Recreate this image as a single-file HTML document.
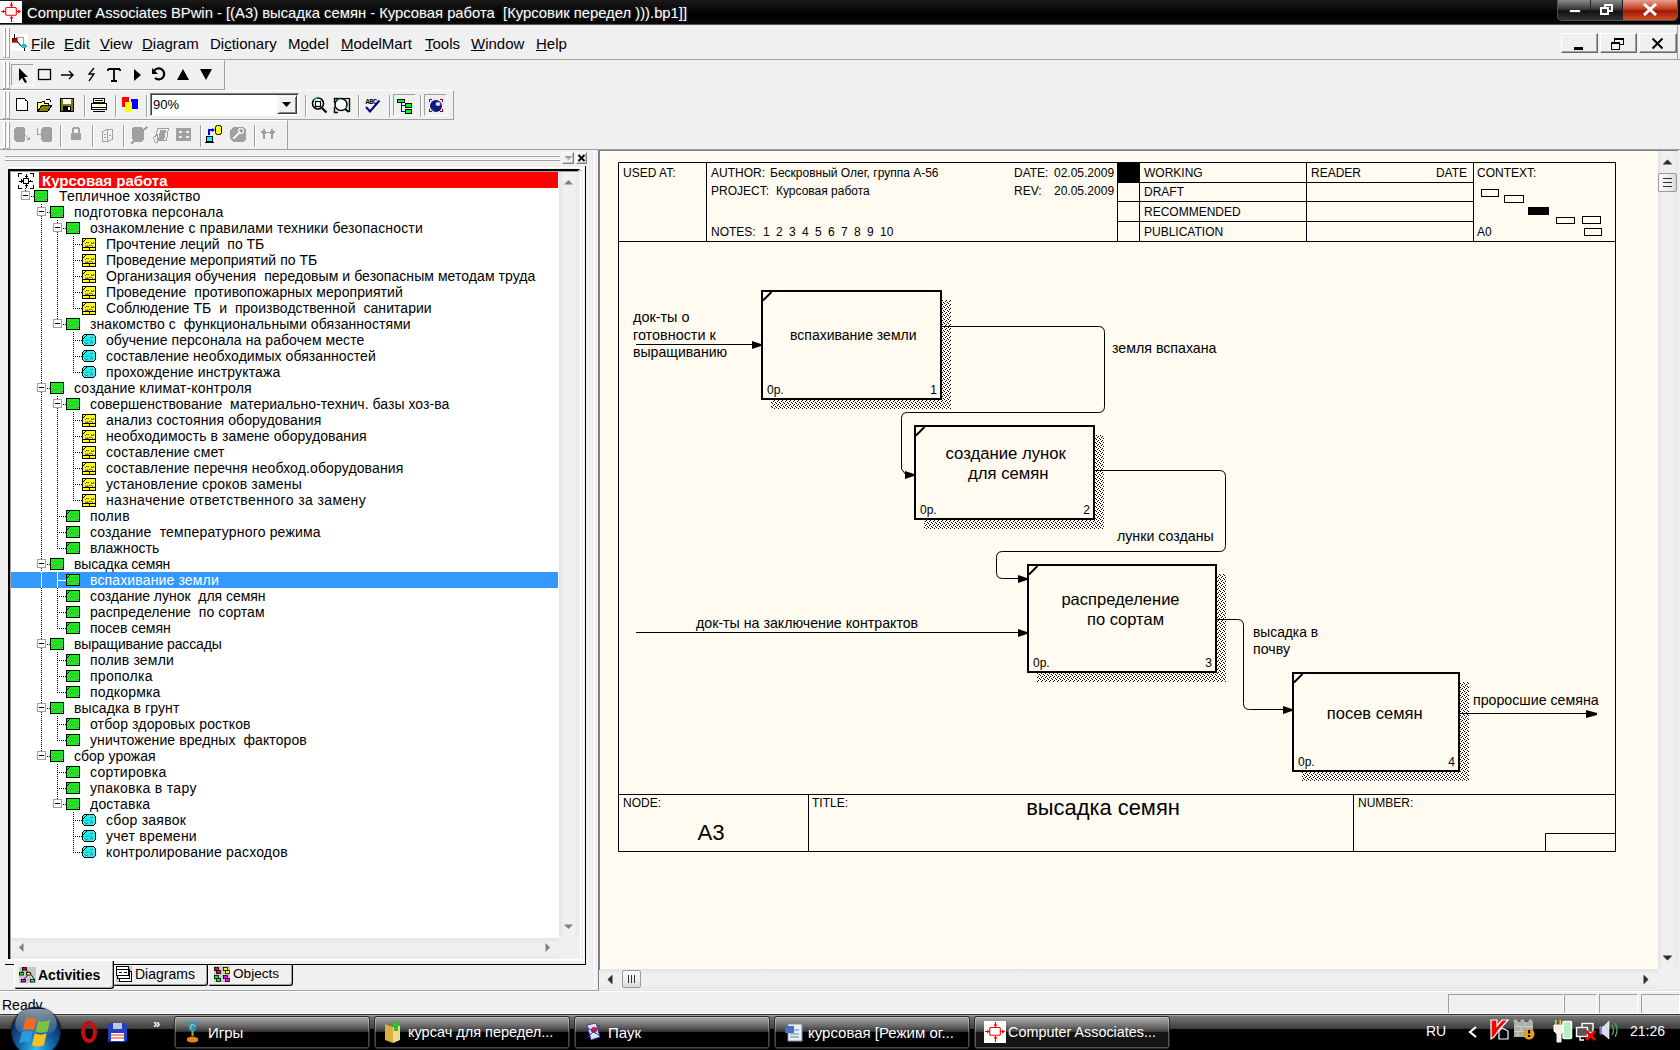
<!DOCTYPE html><html><head><meta charset="utf-8"><style>
*{box-sizing:border-box}
html,body{margin:0;padding:0}
body{width:1680px;height:1050px;overflow:hidden;position:relative;background:#f0f0f0;font-family:"Liberation Sans",sans-serif;color:#000}
.a{position:absolute}
.t{position:absolute;white-space:pre;line-height:1}
</style></head><body>
<div class="a" style="left:0;top:0;width:1680px;height:25px;background:linear-gradient(#1a1a1a,#000 60%,#0a0a0a)"></div>
<div class="a" style="left:0;top:24px;width:1680px;height:1px;background:#555"></div>
<div class="a" style="left:0;top:1px;width:22px;height:22px;background:#fff"></div>
<svg class="a" style="left:0;top:0" width="22" height="24" viewBox="0 0 22 24"><rect x="5.7" y="7.5" width="10.6" height="7.8" rx="1" fill="#fff" stroke="#ff0000" stroke-width="1.1"/><path d="M11.5 2v5M11.5 16v6M1 11.5h4.5M16.5 11.5h4" stroke="#ff0000" stroke-width="1.2"/><path d="M9.5 4.5h4l-2 2.5zM9.5 18.5h4l-2-2.5zM3 9.5v4l2.5-2zM18 9.5v4l3-2z" fill="#ff0000"/></svg>
<div class="t" style="left:27px;top:6px;font-size:14.8px;color:#fff;text-shadow:0 0 3px rgba(255,255,255,.25)">Computer Associates BPwin - [(A3) высадка семян - Курсовая работа  [Курсовик передел ))).bp1]]</div>
<div class="a" style="left:1557px;top:0;width:121px;height:21px;border:1px solid #555;border-top:none;border-radius:0 0 5px 5px;background:#222;overflow:hidden"><div class="a" style="left:0;top:0;width:32px;height:20px;background:linear-gradient(#8a8a8a,#3a3a3a 45%,#111 55%,#333)"></div><div class="a" style="left:33px;top:0;width:31px;height:20px;background:linear-gradient(#8a8a8a,#3a3a3a 45%,#111 55%,#333)"></div><div class="a" style="left:65px;top:0;width:56px;height:20px;background:linear-gradient(#e8a090,#c04020 45%,#a01800 55%,#d05030)"></div><div class="a" style="left:11px;top:9px;width:12px;height:4px;background:#fff;border:1px solid #333"></div><div class="a" style="left:46px;top:4px;width:9px;height:8px;border:2px solid #fff"></div><div class="a" style="left:42px;top:7px;width:9px;height:8px;border:2px solid #fff;background:#333"></div><svg class="a" style="left:84px;top:3px" width="16" height="13"><path d="M2 1L14 12M14 1L2 12" stroke="#fff" stroke-width="3"/></svg></div>
<div class="a" style="left:0;top:25px;width:1680px;height:35px;background:#f0f0f0;border-bottom:1px solid #a0a0a0"></div>
<div class="a" style="left:1677px;top:25px;width:1px;height:35px;background:#a0a0a0"></div>
<div class="a" style="left:3px;top:28px;width:3px;height:30px;background:linear-gradient(90deg,#fff 2px,#a0a0a0 2px)"></div><div class="a" style="left:3px;top:57px;width:3px;height:1px;background:#a0a0a0"></div><div class="a" style="left:7px;top:28px;width:3px;height:30px;background:linear-gradient(90deg,#fff 2px,#a0a0a0 2px)"></div><div class="a" style="left:7px;top:57px;width:3px;height:1px;background:#a0a0a0"></div>
<svg class="a" style="left:11px;top:34px" width="17" height="17" shape-rendering="crispEdges"><rect width="17" height="17" fill="#fff"/><path d="M5 3.5H12.5V10" fill="none" stroke="#a0a0a0"/><path d="M3.5 0V4" stroke="#000"/><rect x="1" y="4" width="5" height="4" fill="#d00000" stroke="#000" stroke-width=".5"/><path d="M6 8l2 1 1 2 2 1" fill="none" stroke="#000" shape-rendering="auto"/><ellipse cx="13" cy="12" rx="3" ry="2" fill="#20c0c0"/><path d="M13 14v3" stroke="#000"/></svg>
<div class="t" style="left:31px;top:36px;font-size:15px;color:#000"><u>F</u>ile</div>
<div class="t" style="left:64px;top:36px;font-size:15px;color:#000"><u>E</u>dit</div>
<div class="t" style="left:100px;top:36px;font-size:15px;color:#000"><u>V</u>iew</div>
<div class="t" style="left:142px;top:36px;font-size:15px;color:#000"><u>D</u>iagram</div>
<div class="t" style="left:210px;top:36px;font-size:15px;color:#000">Di<u>c</u>tionary</div>
<div class="t" style="left:288px;top:36px;font-size:15px;color:#000">M<u>o</u>del</div>
<div class="t" style="left:341px;top:36px;font-size:15px;color:#000"><u>M</u>odelMart</div>
<div class="t" style="left:425px;top:36px;font-size:15px;color:#000"><u>T</u>ools</div>
<div class="t" style="left:471px;top:36px;font-size:15px;color:#000"><u>W</u>indow</div>
<div class="t" style="left:536px;top:36px;font-size:15px;color:#000"><u>H</u>elp</div>
<div class="a" style="left:1561px;top:33px;width:37px;height:20px;background:#f0f0f0;border:1px solid;border-color:#fff #696969 #696969 #fff;box-shadow:inset -1px -1px #a0a0a0"><div class="a" style="left:12px;top:13px;width:9px;height:3px;background:#000"></div></div>
<div class="a" style="left:1600px;top:33px;width:37px;height:20px;background:#f0f0f0;border:1px solid;border-color:#fff #696969 #696969 #fff;box-shadow:inset -1px -1px #a0a0a0"><div class="a" style="left:13px;top:4px;width:10px;height:7px;border:1px solid #000;border-top-width:2px"></div><div class="a" style="left:10px;top:8px;width:9px;height:8px;border:1px solid #000;border-top-width:2px;background:#f0f0f0"></div></div>
<div class="a" style="left:1639px;top:33px;width:38px;height:20px;background:#f0f0f0;border:1px solid;border-color:#fff #696969 #696969 #fff;box-shadow:inset -1px -1px #a0a0a0"><svg class="a" style="left:11px;top:3px" width="13" height="13"><path d="M1.5 1.5L11.5 11.5M11.5 1.5L1.5 11.5" stroke="#000" stroke-width="2"/></svg></div>
<div class="a" style="left:0;top:60px;width:225px;height:30px;border-top:1px solid #fff;border-right:1px solid #a0a0a0;border-bottom:1px solid #a0a0a0"></div>
<div class="a" style="left:0;top:90px;width:454px;height:30px;border-top:1px solid #fff;border-right:1px solid #a0a0a0;border-bottom:1px solid #a0a0a0"></div>
<div class="a" style="left:0;top:120px;width:288px;height:30px;border-top:1px solid #fff;border-right:1px solid #a0a0a0;border-bottom:1px solid #a0a0a0"></div>
<div class="a" style="left:0;top:149px;width:1680px;height:1px;background:#a0a0a0"></div>
<div class="a" style="left:3px;top:62px;width:3px;height:27px;background:linear-gradient(90deg,#fff 2px,#a0a0a0 2px)"></div><div class="a" style="left:3px;top:88px;width:3px;height:1px;background:#a0a0a0"></div><div class="a" style="left:7px;top:62px;width:3px;height:27px;background:linear-gradient(90deg,#fff 2px,#a0a0a0 2px)"></div><div class="a" style="left:7px;top:88px;width:3px;height:1px;background:#a0a0a0"></div>
<div class="a" style="left:3px;top:92px;width:3px;height:27px;background:linear-gradient(90deg,#fff 2px,#a0a0a0 2px)"></div><div class="a" style="left:3px;top:118px;width:3px;height:1px;background:#a0a0a0"></div><div class="a" style="left:7px;top:92px;width:3px;height:27px;background:linear-gradient(90deg,#fff 2px,#a0a0a0 2px)"></div><div class="a" style="left:7px;top:118px;width:3px;height:1px;background:#a0a0a0"></div>
<div class="a" style="left:3px;top:122px;width:3px;height:27px;background:linear-gradient(90deg,#fff 2px,#a0a0a0 2px)"></div><div class="a" style="left:3px;top:148px;width:3px;height:1px;background:#a0a0a0"></div><div class="a" style="left:7px;top:122px;width:3px;height:27px;background:linear-gradient(90deg,#fff 2px,#a0a0a0 2px)"></div><div class="a" style="left:7px;top:148px;width:3px;height:1px;background:#a0a0a0"></div>
<div class="a" style="left:11px;top:64px;width:23px;height:22px;border:1px solid;border-color:#a0a0a0 #fff #fff #a0a0a0;background:repeating-conic-gradient(#f8f8f8 0 25%,#e8e8e8 0 50%) 0 0/2px 2px"></div>
<svg class="a" style="left:0;top:60px" width="230" height="30">
<path d="M19 8v13l3-3 3 5 2-1-3-5h4z" fill="#000"/>
<rect x="38.5" y="9.5" width="12" height="10" fill="none" stroke="#000" stroke-width="1.3"/>
<path d="M61 15h12M69 11l4 4-4 4" fill="none" stroke="#000" stroke-width="1.4"/>
<path d="M94 8l-5 6h5l-5 7" fill="none" stroke="#000" stroke-width="1.3"/>
<path d="M108 9h12M114 9v12M111 21h6M108 9v2M120 9v2" fill="none" stroke="#000" stroke-width="1.8"/>
<path d="M134 9l7 6-7 6z" fill="#000"/>
<path d="M154 11a5.5 5.5 0 1 1 1 7" fill="none" stroke="#000" stroke-width="2.2"/><path d="M152 8v6h6z" fill="#000"/>
<path d="M183 9l6 11h-12z" fill="#000"/>
<path d="M200 9h12l-6 11z" fill="#000"/>
</svg>
<div class="a" style="left:84px;top:95px;width:2px;height:22px;border-left:1px solid #a0a0a0;border-right:1px solid #fff"></div>
<div class="a" style="left:115px;top:95px;width:2px;height:22px;border-left:1px solid #a0a0a0;border-right:1px solid #fff"></div>
<div class="a" style="left:146px;top:95px;width:2px;height:22px;border-left:1px solid #a0a0a0;border-right:1px solid #fff"></div>
<div class="a" style="left:305px;top:95px;width:2px;height:22px;border-left:1px solid #a0a0a0;border-right:1px solid #fff"></div>
<div class="a" style="left:358px;top:95px;width:2px;height:22px;border-left:1px solid #a0a0a0;border-right:1px solid #fff"></div>
<div class="a" style="left:389px;top:95px;width:2px;height:22px;border-left:1px solid #a0a0a0;border-right:1px solid #fff"></div>
<div class="a" style="left:420px;top:95px;width:2px;height:22px;border-left:1px solid #a0a0a0;border-right:1px solid #fff"></div>
<svg class="a" style="left:300px;top:90px" width="160" height="30">
<circle cx="18" cy="13.5" r="5.5" fill="#fff" stroke="#000" stroke-width="1.6"/><path d="M14 11a4 4 0 0 1 3-3" stroke="#0ff" fill="none"/><rect x="15.5" y="11.5" width="5" height="5" fill="none" stroke="#000" stroke-width="1.2"/><path d="M22 18l4.5 4.5" stroke="#000" stroke-width="2.2"/>
<path d="M34.5 13V8.5H38M49.5 8V22" fill="none" stroke="#000" stroke-width="1.4"/><path d="M34.5 17V22.5H38" fill="none" stroke="#000" stroke-width="1.4"/><path d="M38 8.5H49.5" stroke="#000" stroke-width="1.2"/>
<circle cx="41" cy="14.5" r="6" fill="#fff" stroke="#000" stroke-width="1.5"/><path d="M37 12a4 4 0 0 1 3-3M44 19a4 4 0 0 0 2-3" stroke="#0ff" fill="none"/><path d="M45 19l4 3" stroke="#000" stroke-width="2"/>
<text x="65.5" y="13.5" font-size="7" font-weight="bold" fill="#000" font-family="Liberation Mono" letter-spacing="-.5">ABC</text><path d="M66 17l4 4.5 9.5-11" fill="none" stroke="#000080" stroke-width="2"/>
</svg>
<svg class="a" style="left:0;top:90px" width="460" height="30" shape-rendering="crispEdges">
<path d="M16.5 8.5H24.5L27.5 11.5V20.5H16.5Z" fill="#fff" stroke="#000"/><rect x="25" y="10" width="1" height="1" fill="#000"/>
<path d="M37.5 12.5H41.5L42.5 11.5H44.5V13.5H48.5V20.5H37.5Z" fill="#ffff80" stroke="#000"/><path d="M38 21L42 15H52L48 21Z" fill="#808000" stroke="#000"/><path d="M46 10q2-2 4 0l1 2" fill="none" stroke="#000"/>
<rect x="60.5" y="8.5" width="13" height="13" fill="#808000" stroke="#000"/><rect x="63" y="9" width="8" height="5" fill="#fff"/><rect x="63" y="16" width="8" height="6" fill="#000"/><rect x="68" y="17" width="2" height="3" fill="#fff"/>
<path d="M93.5 8.5H104.5V12.5H93.5Z" fill="#fff" stroke="#000"/><path d="M91.5 13.5H106.5V19.5H91.5Z" fill="#fff" stroke="#000"/><path d="M92 17.5H106" stroke="#000"/><rect x="98" y="15" width="4" height="1" fill="#ff0"/><path d="M93 21.5H105" stroke="#000"/><path d="M95 10.5H103" stroke="#000"/>
<rect x="122" y="7" width="7" height="10" fill="#f00"/><rect x="131" y="9" width="7" height="10" fill="#00f"/><rect x="125" y="12" width="7" height="10" fill="#ff0"/><rect x="129" y="12" width="2" height="7" fill="#ff0"/><rect x="133" y="18" width="1" height="1" fill="#000"/>
</svg>
<div class="a" style="left:393px;top:94px;width:23px;height:22px;border:1px solid;border-color:#a0a0a0 #fff #fff #a0a0a0;background:repeating-conic-gradient(#f8f8f8 0 25%,#e8e8e8 0 50%) 0 0/2px 2px"></div>
<div class="a" style="left:424px;top:94px;width:23px;height:22px;border:1px solid;border-color:#a0a0a0 #fff #fff #a0a0a0;background:repeating-conic-gradient(#f8f8f8 0 25%,#e8e8e8 0 50%) 0 0/2px 2px"></div>
<svg class="a" style="left:390px;top:90px" width="60" height="30" shape-rendering="crispEdges">
<rect x="7.5" y="9.5" width="7" height="3" fill="#0f0" stroke="#000"/><rect x="15.5" y="13.5" width="6" height="4" fill="#0f0" stroke="#000"/><rect x="15.5" y="19.5" width="6" height="4" fill="#0f0" stroke="#000"/><path d="M11.5 13V21.5H15M11.5 15.5H15" fill="none" stroke="#00f"/>
<path d="M39.5 12V9.5H42M50 9.5H52.5V12M39.5 19V21.5H42M50 21.5H52.5V19" fill="none" stroke="#a00000" stroke-width="1"/>
</svg>
<svg class="a" style="left:429px;top:99px" width="14" height="14"><circle cx="7" cy="7" r="6" fill="#101880"/><ellipse cx="9" cy="5" rx="2.5" ry="2" fill="#fff" opacity=".85"/><path d="M2 10l3 2" stroke="#0aa" stroke-width="1"/></svg>
<div class="a" style="left:150px;top:93px;width:149px;height:23px;border:1px solid;border-color:#808080 #fff #fff #808080;background:#fff;box-shadow:inset 1px 1px #404040"></div>
<div class="t" style="left:153px;top:98px;font-size:13px">90%</div>
<div class="a" style="left:277px;top:95px;width:20px;height:19px;background:#f0f0f0;border:1px solid;border-color:#f0f0f0 #404040 #404040 #f0f0f0;box-shadow:inset 1px 1px #fff,inset -1px -1px #808080"></div>
<svg class="a" style="left:281px;top:101px" width="12" height="8"><path d="M1 1h9l-4.5 5z" fill="#000"/></svg>
<div class="a" style="left:60px;top:125px;width:2px;height:22px;border-left:1px solid #a0a0a0;border-right:1px solid #fff"></div>
<div class="a" style="left:92px;top:125px;width:2px;height:22px;border-left:1px solid #a0a0a0;border-right:1px solid #fff"></div>
<div class="a" style="left:123px;top:125px;width:2px;height:22px;border-left:1px solid #a0a0a0;border-right:1px solid #fff"></div>
<div class="a" style="left:200px;top:125px;width:2px;height:22px;border-left:1px solid #a0a0a0;border-right:1px solid #fff"></div>
<div class="a" style="left:254px;top:125px;width:2px;height:22px;border-left:1px solid #a0a0a0;border-right:1px solid #fff"></div>
<svg class="a" style="left:0;top:118px" width="290" height="30" fill="#a0a0a0" shape-rendering="crispEdges">
<path d="M16 9H23L25 11V22L23 24H16L14 22V11Z"/><path d="M25 17L28 20" stroke="#a0a0a0" fill="none"/><path d="M26 22H30V18Z"/>
<path d="M37.5 10V16.5H41" stroke="#a0a0a0" fill="none"/><path d="M43 9H50L52 11V22L50 24H43L41 22V11Z"/>
<path d="M71 15H81V22H71Z"/><path d="M73 15V11L74 10H78L79 11V15" fill="none" stroke="#a0a0a0" stroke-width="2"/><rect x="75" y="12" width="2" height="2" fill="#fff"/>
<path d="M102.5 13.5L107.5 11.5H112.5V21.5L107.5 23.5H102.5Z" fill="#f0f0f0" stroke="#a0a0a0"/><path d="M107.5 12V23M104 16h2M104 19h2M109 17h2" stroke="#a0a0a0"/>
<path d="M133 9H141L144 12V21L141 24H135L132 21V12Z"/><path d="M144 12L147 9M131 26L134 23" stroke="#a0a0a0" stroke-width="1.5" fill="none"/>
<path d="M157.5 10.5H168.5L166.5 22.5H155.5Z" fill="#f0f0f0" stroke="#a0a0a0"/><path d="M160 12H166L164 23H158Z"/><path d="M153.5 19.5L157 17V24H155Z" fill="#f0f0f0" stroke="#a0a0a0"/>
<path d="M176 10H191V23H176Z"/><rect x="179" y="13" width="3" height="2" fill="#f0f0f0"/><rect x="186" y="13" width="3" height="2" fill="#f0f0f0"/><rect x="179" y="18" width="3" height="2" fill="#f0f0f0"/><rect x="186" y="18" width="3" height="2" fill="#f0f0f0"/>
<path d="M233 9H243L246 12V21L243 24H233L230 21V12Z"/><path d="M233 21L240 14" stroke="#f0f0f0" stroke-width="2" fill="none"/><circle cx="241" cy="13" r="2.5" fill="none" stroke="#f0f0f0" stroke-width="1.5"/>
<path d="M262 13h4v3h-1v5h-2v-5h-1zM270 13h4v3h-1v5h-2v-5h-1z"/><rect x="263" y="11" width="2" height="2"/><rect x="271" y="11" width="2" height="2"/><path d="M261 13l1 2M275 13l-1 2M266 14h4" stroke="#a0a0a0"/>
</svg>
<svg class="a" style="left:204px;top:123px" width="20" height="22">
<rect x="11.5" y="2.5" width="6" height="9" rx="2" fill="#ff0" stroke="#000"/><path d="M5 12v-5h4" fill="none" stroke="#00f" stroke-width="2"/><path d="M8 5l3 2-3 2z" fill="#00f"/><rect x="2.5" y="13.5" width="6" height="5" fill="#0ff" stroke="#000"/><path d="M1 19.5h9" stroke="#000"/>
</svg>
<div class="a" style="left:5px;top:155px;width:555px;height:2px;border-top:1px solid #fff;border-bottom:1px solid #a0a0a0"></div>
<div class="a" style="left:5px;top:159px;width:555px;height:2px;border-top:1px solid #fff;border-bottom:1px solid #a0a0a0"></div>
<div class="a" style="left:562px;top:152px;width:12px;height:12px;border:1px solid;border-color:#fff #808080 #808080 #fff;box-shadow:inset -1px -1px #c0c0c0"></div>
<svg class="a" style="left:564px;top:156px" width="9" height="5"><path d="M.5 0h8l-4 4z" fill="#a0a0a0"/></svg>
<div class="a" style="left:576px;top:152px;width:11px;height:12px;border:1px solid;border-color:#fff #808080 #808080 #fff;box-shadow:inset -1px -1px #c0c0c0"></div>
<svg class="a" style="left:577px;top:154px" width="9" height="8"><path d="M1.5 1l6 6M7.5 1l-6 6" stroke="#000" stroke-width="1.8"/></svg>
<div class="a" style="left:594px;top:150px;width:1px;height:840px;background:#fff"></div>
<div class="a" style="left:598px;top:150px;width:2px;height:841px;background:#808080"></div>
<div class="a" style="left:0;top:990px;width:600px;height:1px;background:#a0a0a0"></div>
<div class="a" style="left:8px;top:167px;width:576px;height:1px;background:#fff"></div>
<div class="a" style="left:8px;top:169px;width:573px;height:2px;background:#000"></div>
<div class="a" style="left:8px;top:169px;width:2px;height:791px;background:#000"></div>
<div class="a" style="left:10px;top:171px;width:570px;height:1px;background:#a0a0a0"></div>
<div class="a" style="left:10px;top:171px;width:1px;height:788px;background:#a0a0a0"></div>
<div class="a" style="left:11px;top:172px;width:548px;height:766px;background:#fff"></div>
<div class="a" style="left:8px;top:959px;width:577px;height:2px;background:#fff"></div>
<div class="a" style="left:580px;top:172px;width:1px;height:788px;background:#fff"></div>
<div class="a" style="left:583px;top:168px;width:1px;height:792px;background:#fff"></div>
<svg class="a" style="left:578px;top:167px" width="6" height="6"><path d="M4 0L0 4V6L6 0Z" fill="#fff"/></svg>
<div class="a" style="left:585px;top:166px;width:1px;height:799px;background:#000"></div>
<div class="a" style="left:5px;top:964px;width:9px;height:1px;background:#000"></div>
<div class="a" style="left:113px;top:964px;width:473px;height:1px;background:#000"></div>
<div class="a" style="left:559px;top:172px;width:20px;height:764px;background:linear-gradient(90deg,#e3e3e3,#f0f0f0 25%,#f0f0f0 75%,#e8e8e8)"></div>
<svg class="a" style="left:564px;top:179px" width="10" height="6"><path d="M0 5.5h9l-4.5-4.5z" fill="#808080"/></svg>
<svg class="a" style="left:564px;top:924px" width="10" height="6"><path d="M0 .5h9l-4.5 4.5z" fill="#808080"/></svg>
<div class="a" style="left:11px;top:938px;width:548px;height:20px;background:linear-gradient(#e3e3e3,#f0f0f0 25%,#f0f0f0 75%,#e8e8e8)"></div>
<div class="a" style="left:559px;top:936px;width:20px;height:22px;background:#f0f0f0"></div>
<svg class="a" style="left:18px;top:943px" width="6" height="10"><path d="M5.5 0v9l-4.5-4.5z" fill="#808080"/></svg>
<svg class="a" style="left:545px;top:943px" width="6" height="10"><path d="M.5 0v9l4.5-4.5z" fill="#808080"/></svg>
<div class="a" style="left:11px;top:572px;width:547px;height:16px;background:#3399ff"></div>
<div class="a" style="left:39px;top:172px;width:519px;height:16px;background:#f00"></div>
<svg class="a" style="left:0;top:0" width="600" height="900">
<path d="M25.5 188V197" stroke="#000" stroke-width="1" stroke-dasharray="1 1"/>
<path d="M41.5 204V757" stroke="#000" stroke-width="1" stroke-dasharray="1 1"/>
<path d="M57.5 220V325" stroke="#000" stroke-width="1" stroke-dasharray="1 1"/>
<path d="M73.5 236V309" stroke="#000" stroke-width="1" stroke-dasharray="1 1"/>
<path d="M73.5 332V373" stroke="#000" stroke-width="1" stroke-dasharray="1 1"/>
<path d="M57.5 396V549" stroke="#000" stroke-width="1" stroke-dasharray="1 1"/>
<path d="M73.5 412V501" stroke="#000" stroke-width="1" stroke-dasharray="1 1"/>
<path d="M57.5 572V629" stroke="#000" stroke-width="1" stroke-dasharray="1 1"/>
<path d="M57.5 652V693" stroke="#000" stroke-width="1" stroke-dasharray="1 1"/>
<path d="M57.5 716V741" stroke="#000" stroke-width="1" stroke-dasharray="1 1"/>
<path d="M57.5 764V805" stroke="#000" stroke-width="1" stroke-dasharray="1 1"/>
<path d="M73.5 812V853" stroke="#000" stroke-width="1" stroke-dasharray="1 1"/>
<path d="M25 196.5H34" stroke="#000" stroke-width="1" stroke-dasharray="1 1"/>
<path d="M41 212.5H50" stroke="#000" stroke-width="1" stroke-dasharray="1 1"/>
<path d="M57 228.5H66" stroke="#000" stroke-width="1" stroke-dasharray="1 1"/>
<path d="M73 244.5H82" stroke="#000" stroke-width="1" stroke-dasharray="1 1"/>
<path d="M73 260.5H82" stroke="#000" stroke-width="1" stroke-dasharray="1 1"/>
<path d="M73 276.5H82" stroke="#000" stroke-width="1" stroke-dasharray="1 1"/>
<path d="M73 292.5H82" stroke="#000" stroke-width="1" stroke-dasharray="1 1"/>
<path d="M73 308.5H82" stroke="#000" stroke-width="1" stroke-dasharray="1 1"/>
<path d="M57 324.5H66" stroke="#000" stroke-width="1" stroke-dasharray="1 1"/>
<path d="M73 340.5H82" stroke="#000" stroke-width="1" stroke-dasharray="1 1"/>
<path d="M73 356.5H82" stroke="#000" stroke-width="1" stroke-dasharray="1 1"/>
<path d="M73 372.5H82" stroke="#000" stroke-width="1" stroke-dasharray="1 1"/>
<path d="M41 388.5H50" stroke="#000" stroke-width="1" stroke-dasharray="1 1"/>
<path d="M57 404.5H66" stroke="#000" stroke-width="1" stroke-dasharray="1 1"/>
<path d="M73 420.5H82" stroke="#000" stroke-width="1" stroke-dasharray="1 1"/>
<path d="M73 436.5H82" stroke="#000" stroke-width="1" stroke-dasharray="1 1"/>
<path d="M73 452.5H82" stroke="#000" stroke-width="1" stroke-dasharray="1 1"/>
<path d="M73 468.5H82" stroke="#000" stroke-width="1" stroke-dasharray="1 1"/>
<path d="M73 484.5H82" stroke="#000" stroke-width="1" stroke-dasharray="1 1"/>
<path d="M73 500.5H82" stroke="#000" stroke-width="1" stroke-dasharray="1 1"/>
<path d="M57 516.5H66" stroke="#000" stroke-width="1" stroke-dasharray="1 1"/>
<path d="M57 532.5H66" stroke="#000" stroke-width="1" stroke-dasharray="1 1"/>
<path d="M57 548.5H66" stroke="#000" stroke-width="1" stroke-dasharray="1 1"/>
<path d="M41 564.5H50" stroke="#000" stroke-width="1" stroke-dasharray="1 1"/>
<path d="M57 580.5H66" stroke="#000" stroke-width="1" stroke-dasharray="1 1"/>
<path d="M57 596.5H66" stroke="#000" stroke-width="1" stroke-dasharray="1 1"/>
<path d="M57 612.5H66" stroke="#000" stroke-width="1" stroke-dasharray="1 1"/>
<path d="M57 628.5H66" stroke="#000" stroke-width="1" stroke-dasharray="1 1"/>
<path d="M41 644.5H50" stroke="#000" stroke-width="1" stroke-dasharray="1 1"/>
<path d="M57 660.5H66" stroke="#000" stroke-width="1" stroke-dasharray="1 1"/>
<path d="M57 676.5H66" stroke="#000" stroke-width="1" stroke-dasharray="1 1"/>
<path d="M57 692.5H66" stroke="#000" stroke-width="1" stroke-dasharray="1 1"/>
<path d="M41 708.5H50" stroke="#000" stroke-width="1" stroke-dasharray="1 1"/>
<path d="M57 724.5H66" stroke="#000" stroke-width="1" stroke-dasharray="1 1"/>
<path d="M57 740.5H66" stroke="#000" stroke-width="1" stroke-dasharray="1 1"/>
<path d="M41 756.5H50" stroke="#000" stroke-width="1" stroke-dasharray="1 1"/>
<path d="M57 772.5H66" stroke="#000" stroke-width="1" stroke-dasharray="1 1"/>
<path d="M57 788.5H66" stroke="#000" stroke-width="1" stroke-dasharray="1 1"/>
<path d="M57 804.5H66" stroke="#000" stroke-width="1" stroke-dasharray="1 1"/>
<path d="M73 820.5H82" stroke="#000" stroke-width="1" stroke-dasharray="1 1"/>
<path d="M73 836.5H82" stroke="#000" stroke-width="1" stroke-dasharray="1 1"/>
<path d="M73 852.5H82" stroke="#000" stroke-width="1" stroke-dasharray="1 1"/>
</svg>
<div class="a" style="left:41px;top:572px;width:1px;height:16px;background:#fff"></div>
<div class="a" style="left:57px;top:572px;width:1px;height:16px;background:#fff"></div>
<div class="a" style="left:57px;top:580px;width:9px;height:1px;background:#fff"></div>
<svg class="a" style="left:18px;top:173px" width="16" height="16" shape-rendering="crispEdges"><path d="M.5 4V.5H4M12 .5h3.5V4M.5 12v3.5H4M12 15.5h3.5V12" fill="none" stroke="#000"/><rect x="5.5" y="5.5" width="5" height="5" fill="#fff" stroke="#000"/><path d="M8 1v4M8 11v4M1 8h4M11 8h4" stroke="#000"/><path d="M6 3h4L8 5zM6 13h4L8 11zM3 6v4L5 8zM13 6v4L11 8z" fill="#000"/></svg>
<div class="t" style="left:42px;top:173px;font-size:15px;font-weight:bold;color:#fff">Курсовая работа</div>
<div class="a" style="left:21px;top:191px;width:9px;height:9px;border:1px solid #a0a0a0;background:#fff"></div><div class="a" style="left:23px;top:195px;width:5px;height:1px;background:#000"></div>
<svg class="a" style="left:34px;top:190px" width="14" height="12" shape-rendering="crispEdges"><rect x=".5" y=".5" width="13" height="11" fill="#00ff00" stroke="#000"/><path d="M3 4h1l1-1h1l1 1h1M9 3v1h2v-1M3 6v1h2v-1M6 7h1l1-1h1l1 1h1M1 9.5h2M10 9.5h3" fill="none" stroke="#a070a0"/></svg>
<div class="t" style="left:59px;top:189px;font-size:14px;letter-spacing:0.162px;color:#000">Тепличное хозяйство</div>
<div class="a" style="left:37px;top:207px;width:9px;height:9px;border:1px solid #a0a0a0;background:#fff"></div><div class="a" style="left:39px;top:211px;width:5px;height:1px;background:#000"></div>
<svg class="a" style="left:50px;top:206px" width="14" height="12" shape-rendering="crispEdges"><rect x=".5" y=".5" width="13" height="11" fill="#00ff00" stroke="#000"/><path d="M3 4h1l1-1h1l1 1h1M9 3v1h2v-1M3 6v1h2v-1M6 7h1l1-1h1l1 1h1M1 9.5h2M10 9.5h3" fill="none" stroke="#a070a0"/></svg>
<div class="t" style="left:74px;top:205px;font-size:14px;letter-spacing:0.244px;color:#000">подготовка персонала</div>
<div class="a" style="left:53px;top:223px;width:9px;height:9px;border:1px solid #a0a0a0;background:#fff"></div><div class="a" style="left:55px;top:227px;width:5px;height:1px;background:#000"></div>
<svg class="a" style="left:66px;top:222px" width="14" height="12" shape-rendering="crispEdges"><rect x=".5" y=".5" width="13" height="11" fill="#00ff00" stroke="#000"/><path d="M3 4h1l1-1h1l1 1h1M9 3v1h2v-1M3 6v1h2v-1M6 7h1l1-1h1l1 1h1M1 9.5h2M10 9.5h3" fill="none" stroke="#a070a0"/></svg>
<div class="t" style="left:90px;top:221px;font-size:14px;letter-spacing:0.16px;color:#000">ознакомление с правилами техники безопасности</div>
<svg class="a" style="left:82px;top:238px" width="14" height="13" shape-rendering="crispEdges"><rect x=".5" y=".5" width="13" height="12" fill="#ffff00" stroke="#000"/><path d="M1 9.5h12M7.5 9v3" stroke="#000"/><path d="M1 4L4 1" stroke="#000" shape-rendering="auto"/><path d="M3 5h1l1-1h1l1 1M9 4v1h2v-1M3 7v1h2v-1M6 8h1l1-1h1l1 1h1" fill="none" stroke="#6868a8"/></svg>
<div class="t" style="left:106px;top:237px;font-size:14px;letter-spacing:0.001px;color:#000">Прочтение леций  по ТБ</div>
<svg class="a" style="left:82px;top:254px" width="14" height="13" shape-rendering="crispEdges"><rect x=".5" y=".5" width="13" height="12" fill="#ffff00" stroke="#000"/><path d="M1 9.5h12M7.5 9v3" stroke="#000"/><path d="M1 4L4 1" stroke="#000" shape-rendering="auto"/><path d="M3 5h1l1-1h1l1 1M9 4v1h2v-1M3 7v1h2v-1M6 8h1l1-1h1l1 1h1" fill="none" stroke="#6868a8"/></svg>
<div class="t" style="left:106px;top:253px;font-size:14px;letter-spacing:0.038px;color:#000">Проведение мероприятий по ТБ</div>
<svg class="a" style="left:82px;top:270px" width="14" height="13" shape-rendering="crispEdges"><rect x=".5" y=".5" width="13" height="12" fill="#ffff00" stroke="#000"/><path d="M1 9.5h12M7.5 9v3" stroke="#000"/><path d="M1 4L4 1" stroke="#000" shape-rendering="auto"/><path d="M3 5h1l1-1h1l1 1M9 4v1h2v-1M3 7v1h2v-1M6 8h1l1-1h1l1 1h1" fill="none" stroke="#6868a8"/></svg>
<div class="t" style="left:106px;top:269px;font-size:14px;letter-spacing:0.06px;color:#000">Организация обучения  передовым и безопасным методам труда</div>
<svg class="a" style="left:82px;top:286px" width="14" height="13" shape-rendering="crispEdges"><rect x=".5" y=".5" width="13" height="12" fill="#ffff00" stroke="#000"/><path d="M1 9.5h12M7.5 9v3" stroke="#000"/><path d="M1 4L4 1" stroke="#000" shape-rendering="auto"/><path d="M3 5h1l1-1h1l1 1M9 4v1h2v-1M3 7v1h2v-1M6 8h1l1-1h1l1 1h1" fill="none" stroke="#6868a8"/></svg>
<div class="t" style="left:106px;top:285px;font-size:14px;letter-spacing:0.065px;color:#000">Проведение  противопожарных мероприятий</div>
<svg class="a" style="left:82px;top:302px" width="14" height="13" shape-rendering="crispEdges"><rect x=".5" y=".5" width="13" height="12" fill="#ffff00" stroke="#000"/><path d="M1 9.5h12M7.5 9v3" stroke="#000"/><path d="M1 4L4 1" stroke="#000" shape-rendering="auto"/><path d="M3 5h1l1-1h1l1 1M9 4v1h2v-1M3 7v1h2v-1M6 8h1l1-1h1l1 1h1" fill="none" stroke="#6868a8"/></svg>
<div class="t" style="left:106px;top:301px;font-size:14px;letter-spacing:0.052px;color:#000">Соблюдение ТБ  и  производственной  санитарии</div>
<div class="a" style="left:53px;top:319px;width:9px;height:9px;border:1px solid #a0a0a0;background:#fff"></div><div class="a" style="left:55px;top:323px;width:5px;height:1px;background:#000"></div>
<svg class="a" style="left:66px;top:318px" width="14" height="12" shape-rendering="crispEdges"><rect x=".5" y=".5" width="13" height="11" fill="#00ff00" stroke="#000"/><path d="M3 4h1l1-1h1l1 1h1M9 3v1h2v-1M3 6v1h2v-1M6 7h1l1-1h1l1 1h1M1 9.5h2M10 9.5h3" fill="none" stroke="#a070a0"/></svg>
<div class="t" style="left:90px;top:317px;font-size:14px;letter-spacing:0.071px;color:#000">знакомство с  функциональными обязанностями</div>
<svg class="a" style="left:82px;top:334px" width="14" height="12" shape-rendering="crispEdges"><path d="M2.5 .5H11.5L13.5 2.5V9.5L11.5 11.5H2.5L.5 9.5V2.5Z" fill="#00ffff" stroke="#000"/><path d="M1 5L5 1" stroke="#000" shape-rendering="auto"/><path d="M8 3h2l1 1M3 6h2l1-1 1 1h1M9 5v2h2M3 8v1h2v-1M7 9h1l1-1 1 1h1" fill="none" stroke="#a86868"/></svg>
<div class="t" style="left:106px;top:333px;font-size:14px;letter-spacing:0.074px;color:#000">обучение персонала на рабочем месте</div>
<svg class="a" style="left:82px;top:350px" width="14" height="12" shape-rendering="crispEdges"><path d="M2.5 .5H11.5L13.5 2.5V9.5L11.5 11.5H2.5L.5 9.5V2.5Z" fill="#00ffff" stroke="#000"/><path d="M1 5L5 1" stroke="#000" shape-rendering="auto"/><path d="M8 3h2l1 1M3 6h2l1-1 1 1h1M9 5v2h2M3 8v1h2v-1M7 9h1l1-1 1 1h1" fill="none" stroke="#a86868"/></svg>
<div class="t" style="left:106px;top:349px;font-size:14px;letter-spacing:0.065px;color:#000">составление необходимых обязанностей</div>
<svg class="a" style="left:82px;top:366px" width="14" height="12" shape-rendering="crispEdges"><path d="M2.5 .5H11.5L13.5 2.5V9.5L11.5 11.5H2.5L.5 9.5V2.5Z" fill="#00ffff" stroke="#000"/><path d="M1 5L5 1" stroke="#000" shape-rendering="auto"/><path d="M8 3h2l1 1M3 6h2l1-1 1 1h1M9 5v2h2M3 8v1h2v-1M7 9h1l1-1 1 1h1" fill="none" stroke="#a86868"/></svg>
<div class="t" style="left:106px;top:365px;font-size:14px;letter-spacing:0.146px;color:#000">прохождение инструктажа</div>
<div class="a" style="left:37px;top:383px;width:9px;height:9px;border:1px solid #a0a0a0;background:#fff"></div><div class="a" style="left:39px;top:387px;width:5px;height:1px;background:#000"></div>
<svg class="a" style="left:50px;top:382px" width="14" height="12" shape-rendering="crispEdges"><rect x=".5" y=".5" width="13" height="11" fill="#00ff00" stroke="#000"/><path d="M3 4h1l1-1h1l1 1h1M9 3v1h2v-1M3 6v1h2v-1M6 7h1l1-1h1l1 1h1M1 9.5h2M10 9.5h3" fill="none" stroke="#a070a0"/></svg>
<div class="t" style="left:74px;top:381px;font-size:14px;letter-spacing:0.171px;color:#000">создание климат-контроля</div>
<div class="a" style="left:53px;top:399px;width:9px;height:9px;border:1px solid #a0a0a0;background:#fff"></div><div class="a" style="left:55px;top:403px;width:5px;height:1px;background:#000"></div>
<svg class="a" style="left:66px;top:398px" width="14" height="12" shape-rendering="crispEdges"><rect x=".5" y=".5" width="13" height="11" fill="#00ff00" stroke="#000"/><path d="M3 4h1l1-1h1l1 1h1M9 3v1h2v-1M3 6v1h2v-1M6 7h1l1-1h1l1 1h1M1 9.5h2M10 9.5h3" fill="none" stroke="#a070a0"/></svg>
<div class="t" style="left:90px;top:397px;font-size:14px;letter-spacing:0.046px;color:#000">совершенствование  материально-технич. базы хоз-ва</div>
<svg class="a" style="left:82px;top:414px" width="14" height="13" shape-rendering="crispEdges"><rect x=".5" y=".5" width="13" height="12" fill="#ffff00" stroke="#000"/><path d="M1 9.5h12M7.5 9v3" stroke="#000"/><path d="M1 4L4 1" stroke="#000" shape-rendering="auto"/><path d="M3 5h1l1-1h1l1 1M9 4v1h2v-1M3 7v1h2v-1M6 8h1l1-1h1l1 1h1" fill="none" stroke="#6868a8"/></svg>
<div class="t" style="left:106px;top:413px;font-size:14px;letter-spacing:0.114px;color:#000">анализ состояния оборудования</div>
<svg class="a" style="left:82px;top:430px" width="14" height="13" shape-rendering="crispEdges"><rect x=".5" y=".5" width="13" height="12" fill="#ffff00" stroke="#000"/><path d="M1 9.5h12M7.5 9v3" stroke="#000"/><path d="M1 4L4 1" stroke="#000" shape-rendering="auto"/><path d="M3 5h1l1-1h1l1 1M9 4v1h2v-1M3 7v1h2v-1M6 8h1l1-1h1l1 1h1" fill="none" stroke="#6868a8"/></svg>
<div class="t" style="left:106px;top:429px;font-size:14px;letter-spacing:0.096px;color:#000">необходимость в замене оборудования</div>
<svg class="a" style="left:82px;top:446px" width="14" height="13" shape-rendering="crispEdges"><rect x=".5" y=".5" width="13" height="12" fill="#ffff00" stroke="#000"/><path d="M1 9.5h12M7.5 9v3" stroke="#000"/><path d="M1 4L4 1" stroke="#000" shape-rendering="auto"/><path d="M3 5h1l1-1h1l1 1M9 4v1h2v-1M3 7v1h2v-1M6 8h1l1-1h1l1 1h1" fill="none" stroke="#6868a8"/></svg>
<div class="t" style="left:106px;top:445px;font-size:14px;letter-spacing:0.111px;color:#000">составление смет</div>
<svg class="a" style="left:82px;top:462px" width="14" height="13" shape-rendering="crispEdges"><rect x=".5" y=".5" width="13" height="12" fill="#ffff00" stroke="#000"/><path d="M1 9.5h12M7.5 9v3" stroke="#000"/><path d="M1 4L4 1" stroke="#000" shape-rendering="auto"/><path d="M3 5h1l1-1h1l1 1M9 4v1h2v-1M3 7v1h2v-1M6 8h1l1-1h1l1 1h1" fill="none" stroke="#6868a8"/></svg>
<div class="t" style="left:106px;top:461px;font-size:14px;letter-spacing:0.126px;color:#000">составление перечня необход.оборудования</div>
<svg class="a" style="left:82px;top:478px" width="14" height="13" shape-rendering="crispEdges"><rect x=".5" y=".5" width="13" height="12" fill="#ffff00" stroke="#000"/><path d="M1 9.5h12M7.5 9v3" stroke="#000"/><path d="M1 4L4 1" stroke="#000" shape-rendering="auto"/><path d="M3 5h1l1-1h1l1 1M9 4v1h2v-1M3 7v1h2v-1M6 8h1l1-1h1l1 1h1" fill="none" stroke="#6868a8"/></svg>
<div class="t" style="left:106px;top:477px;font-size:14px;letter-spacing:0.185px;color:#000">установление сроков замены</div>
<svg class="a" style="left:82px;top:494px" width="14" height="13" shape-rendering="crispEdges"><rect x=".5" y=".5" width="13" height="12" fill="#ffff00" stroke="#000"/><path d="M1 9.5h12M7.5 9v3" stroke="#000"/><path d="M1 4L4 1" stroke="#000" shape-rendering="auto"/><path d="M3 5h1l1-1h1l1 1M9 4v1h2v-1M3 7v1h2v-1M6 8h1l1-1h1l1 1h1" fill="none" stroke="#6868a8"/></svg>
<div class="t" style="left:106px;top:493px;font-size:14px;letter-spacing:0.383px;color:#000">назначение ответственного за замену</div>
<svg class="a" style="left:66px;top:510px" width="14" height="12" shape-rendering="crispEdges"><rect x=".5" y=".5" width="13" height="11" fill="#00ff00" stroke="#000"/><path d="M3 4h1l1-1h1l1 1h1M9 3v1h2v-1M3 6v1h2v-1M6 7h1l1-1h1l1 1h1M1 9.5h2M10 9.5h3" fill="none" stroke="#a070a0"/><path d="M1 4L4 1" stroke="#000" shape-rendering="auto"/></svg>
<div class="t" style="left:90px;top:509px;font-size:14px;letter-spacing:0.278px;color:#000">полив</div>
<svg class="a" style="left:66px;top:526px" width="14" height="12" shape-rendering="crispEdges"><rect x=".5" y=".5" width="13" height="11" fill="#00ff00" stroke="#000"/><path d="M3 4h1l1-1h1l1 1h1M9 3v1h2v-1M3 6v1h2v-1M6 7h1l1-1h1l1 1h1M1 9.5h2M10 9.5h3" fill="none" stroke="#a070a0"/><path d="M1 4L4 1" stroke="#000" shape-rendering="auto"/></svg>
<div class="t" style="left:90px;top:525px;font-size:14px;letter-spacing:0.168px;color:#000">создание  температурного режима</div>
<svg class="a" style="left:66px;top:542px" width="14" height="12" shape-rendering="crispEdges"><rect x=".5" y=".5" width="13" height="11" fill="#00ff00" stroke="#000"/><path d="M3 4h1l1-1h1l1 1h1M9 3v1h2v-1M3 6v1h2v-1M6 7h1l1-1h1l1 1h1M1 9.5h2M10 9.5h3" fill="none" stroke="#a070a0"/><path d="M1 4L4 1" stroke="#000" shape-rendering="auto"/></svg>
<div class="t" style="left:90px;top:541px;font-size:14px;letter-spacing:0.092px;color:#000">влажность</div>
<div class="a" style="left:37px;top:559px;width:9px;height:9px;border:1px solid #a0a0a0;background:#fff"></div><div class="a" style="left:39px;top:563px;width:5px;height:1px;background:#000"></div>
<svg class="a" style="left:50px;top:558px" width="14" height="12" shape-rendering="crispEdges"><rect x=".5" y=".5" width="13" height="11" fill="#00ff00" stroke="#000"/><path d="M3 4h1l1-1h1l1 1h1M9 3v1h2v-1M3 6v1h2v-1M6 7h1l1-1h1l1 1h1M1 9.5h2M10 9.5h3" fill="none" stroke="#a070a0"/></svg>
<div class="t" style="left:74px;top:557px;font-size:14px;letter-spacing:-0.166px;color:#000">высадка семян</div>
<svg class="a" style="left:66px;top:574px" width="14" height="12" shape-rendering="crispEdges"><rect x=".5" y=".5" width="13" height="11" fill="#00ff00" stroke="#000"/><path d="M3 4h1l1-1h1l1 1h1M9 3v1h2v-1M3 6v1h2v-1M6 7h1l1-1h1l1 1h1M1 9.5h2M10 9.5h3" fill="none" stroke="#a070a0"/><path d="M1 4L4 1" stroke="#000" shape-rendering="auto"/></svg>
<div class="t" style="left:90px;top:573px;font-size:14px;letter-spacing:0.142px;color:#fff">вспахивание земли</div>
<svg class="a" style="left:66px;top:590px" width="14" height="12" shape-rendering="crispEdges"><rect x=".5" y=".5" width="13" height="11" fill="#00ff00" stroke="#000"/><path d="M3 4h1l1-1h1l1 1h1M9 3v1h2v-1M3 6v1h2v-1M6 7h1l1-1h1l1 1h1M1 9.5h2M10 9.5h3" fill="none" stroke="#a070a0"/><path d="M1 4L4 1" stroke="#000" shape-rendering="auto"/></svg>
<div class="t" style="left:90px;top:589px;font-size:14px;letter-spacing:-0.025px;color:#000">создание лунок  для семян</div>
<svg class="a" style="left:66px;top:606px" width="14" height="12" shape-rendering="crispEdges"><rect x=".5" y=".5" width="13" height="11" fill="#00ff00" stroke="#000"/><path d="M3 4h1l1-1h1l1 1h1M9 3v1h2v-1M3 6v1h2v-1M6 7h1l1-1h1l1 1h1M1 9.5h2M10 9.5h3" fill="none" stroke="#a070a0"/><path d="M1 4L4 1" stroke="#000" shape-rendering="auto"/></svg>
<div class="t" style="left:90px;top:605px;font-size:14px;letter-spacing:0.055px;color:#000">распределение  по сортам</div>
<svg class="a" style="left:66px;top:622px" width="14" height="12" shape-rendering="crispEdges"><rect x=".5" y=".5" width="13" height="11" fill="#00ff00" stroke="#000"/><path d="M3 4h1l1-1h1l1 1h1M9 3v1h2v-1M3 6v1h2v-1M6 7h1l1-1h1l1 1h1M1 9.5h2M10 9.5h3" fill="none" stroke="#a070a0"/><path d="M1 4L4 1" stroke="#000" shape-rendering="auto"/></svg>
<div class="t" style="left:90px;top:621px;font-size:14px;letter-spacing:-0.05px;color:#000">посев семян</div>
<div class="a" style="left:37px;top:639px;width:9px;height:9px;border:1px solid #a0a0a0;background:#fff"></div><div class="a" style="left:39px;top:643px;width:5px;height:1px;background:#000"></div>
<svg class="a" style="left:50px;top:638px" width="14" height="12" shape-rendering="crispEdges"><rect x=".5" y=".5" width="13" height="11" fill="#00ff00" stroke="#000"/><path d="M3 4h1l1-1h1l1 1h1M9 3v1h2v-1M3 6v1h2v-1M6 7h1l1-1h1l1 1h1M1 9.5h2M10 9.5h3" fill="none" stroke="#a070a0"/></svg>
<div class="t" style="left:74px;top:637px;font-size:14px;letter-spacing:-0.139px;color:#000">выращивание рассады</div>
<svg class="a" style="left:66px;top:654px" width="14" height="12" shape-rendering="crispEdges"><rect x=".5" y=".5" width="13" height="11" fill="#00ff00" stroke="#000"/><path d="M3 4h1l1-1h1l1 1h1M9 3v1h2v-1M3 6v1h2v-1M6 7h1l1-1h1l1 1h1M1 9.5h2M10 9.5h3" fill="none" stroke="#a070a0"/><path d="M1 4L4 1" stroke="#000" shape-rendering="auto"/></svg>
<div class="t" style="left:90px;top:653px;font-size:14px;letter-spacing:0.176px;color:#000">полив земли</div>
<svg class="a" style="left:66px;top:670px" width="14" height="12" shape-rendering="crispEdges"><rect x=".5" y=".5" width="13" height="11" fill="#00ff00" stroke="#000"/><path d="M3 4h1l1-1h1l1 1h1M9 3v1h2v-1M3 6v1h2v-1M6 7h1l1-1h1l1 1h1M1 9.5h2M10 9.5h3" fill="none" stroke="#a070a0"/><path d="M1 4L4 1" stroke="#000" shape-rendering="auto"/></svg>
<div class="t" style="left:90px;top:669px;font-size:14px;letter-spacing:0.271px;color:#000">прополка</div>
<svg class="a" style="left:66px;top:686px" width="14" height="12" shape-rendering="crispEdges"><rect x=".5" y=".5" width="13" height="11" fill="#00ff00" stroke="#000"/><path d="M3 4h1l1-1h1l1 1h1M9 3v1h2v-1M3 6v1h2v-1M6 7h1l1-1h1l1 1h1M1 9.5h2M10 9.5h3" fill="none" stroke="#a070a0"/><path d="M1 4L4 1" stroke="#000" shape-rendering="auto"/></svg>
<div class="t" style="left:90px;top:685px;font-size:14px;letter-spacing:0.184px;color:#000">подкормка</div>
<div class="a" style="left:37px;top:703px;width:9px;height:9px;border:1px solid #a0a0a0;background:#fff"></div><div class="a" style="left:39px;top:707px;width:5px;height:1px;background:#000"></div>
<svg class="a" style="left:50px;top:702px" width="14" height="12" shape-rendering="crispEdges"><rect x=".5" y=".5" width="13" height="11" fill="#00ff00" stroke="#000"/><path d="M3 4h1l1-1h1l1 1h1M9 3v1h2v-1M3 6v1h2v-1M6 7h1l1-1h1l1 1h1M1 9.5h2M10 9.5h3" fill="none" stroke="#a070a0"/></svg>
<div class="t" style="left:74px;top:701px;font-size:14px;letter-spacing:0.109px;color:#000">высадка в грунт</div>
<svg class="a" style="left:66px;top:718px" width="14" height="12" shape-rendering="crispEdges"><rect x=".5" y=".5" width="13" height="11" fill="#00ff00" stroke="#000"/><path d="M3 4h1l1-1h1l1 1h1M9 3v1h2v-1M3 6v1h2v-1M6 7h1l1-1h1l1 1h1M1 9.5h2M10 9.5h3" fill="none" stroke="#a070a0"/><path d="M1 4L4 1" stroke="#000" shape-rendering="auto"/></svg>
<div class="t" style="left:90px;top:717px;font-size:14px;letter-spacing:0.124px;color:#000">отбор здоровых ростков</div>
<svg class="a" style="left:66px;top:734px" width="14" height="12" shape-rendering="crispEdges"><rect x=".5" y=".5" width="13" height="11" fill="#00ff00" stroke="#000"/><path d="M3 4h1l1-1h1l1 1h1M9 3v1h2v-1M3 6v1h2v-1M6 7h1l1-1h1l1 1h1M1 9.5h2M10 9.5h3" fill="none" stroke="#a070a0"/><path d="M1 4L4 1" stroke="#000" shape-rendering="auto"/></svg>
<div class="t" style="left:90px;top:733px;font-size:14px;letter-spacing:0.09px;color:#000">уничтожение вредных  факторов</div>
<div class="a" style="left:37px;top:751px;width:9px;height:9px;border:1px solid #a0a0a0;background:#fff"></div><div class="a" style="left:39px;top:755px;width:5px;height:1px;background:#000"></div>
<svg class="a" style="left:50px;top:750px" width="14" height="12" shape-rendering="crispEdges"><rect x=".5" y=".5" width="13" height="11" fill="#00ff00" stroke="#000"/><path d="M3 4h1l1-1h1l1 1h1M9 3v1h2v-1M3 6v1h2v-1M6 7h1l1-1h1l1 1h1M1 9.5h2M10 9.5h3" fill="none" stroke="#a070a0"/></svg>
<div class="t" style="left:74px;top:749px;font-size:14px;letter-spacing:0.013px;color:#000">сбор урожая</div>
<svg class="a" style="left:66px;top:766px" width="14" height="12" shape-rendering="crispEdges"><rect x=".5" y=".5" width="13" height="11" fill="#00ff00" stroke="#000"/><path d="M3 4h1l1-1h1l1 1h1M9 3v1h2v-1M3 6v1h2v-1M6 7h1l1-1h1l1 1h1M1 9.5h2M10 9.5h3" fill="none" stroke="#a070a0"/><path d="M1 4L4 1" stroke="#000" shape-rendering="auto"/></svg>
<div class="t" style="left:90px;top:765px;font-size:14px;letter-spacing:0.257px;color:#000">сортировка</div>
<svg class="a" style="left:66px;top:782px" width="14" height="12" shape-rendering="crispEdges"><rect x=".5" y=".5" width="13" height="11" fill="#00ff00" stroke="#000"/><path d="M3 4h1l1-1h1l1 1h1M9 3v1h2v-1M3 6v1h2v-1M6 7h1l1-1h1l1 1h1M1 9.5h2M10 9.5h3" fill="none" stroke="#a070a0"/><path d="M1 4L4 1" stroke="#000" shape-rendering="auto"/></svg>
<div class="t" style="left:90px;top:781px;font-size:14px;letter-spacing:0.316px;color:#000">упаковка в тару</div>
<div class="a" style="left:53px;top:799px;width:9px;height:9px;border:1px solid #a0a0a0;background:#fff"></div><div class="a" style="left:55px;top:803px;width:5px;height:1px;background:#000"></div>
<svg class="a" style="left:66px;top:798px" width="14" height="12" shape-rendering="crispEdges"><rect x=".5" y=".5" width="13" height="11" fill="#00ff00" stroke="#000"/><path d="M3 4h1l1-1h1l1 1h1M9 3v1h2v-1M3 6v1h2v-1M6 7h1l1-1h1l1 1h1M1 9.5h2M10 9.5h3" fill="none" stroke="#a070a0"/></svg>
<div class="t" style="left:90px;top:797px;font-size:14px;letter-spacing:0.207px;color:#000">доставка</div>
<svg class="a" style="left:82px;top:814px" width="14" height="12" shape-rendering="crispEdges"><path d="M2.5 .5H11.5L13.5 2.5V9.5L11.5 11.5H2.5L.5 9.5V2.5Z" fill="#00ffff" stroke="#000"/><path d="M1 5L5 1" stroke="#000" shape-rendering="auto"/><path d="M8 3h2l1 1M3 6h2l1-1 1 1h1M9 5v2h2M3 8v1h2v-1M7 9h1l1-1 1 1h1" fill="none" stroke="#a86868"/></svg>
<div class="t" style="left:106px;top:813px;font-size:14px;letter-spacing:0.234px;color:#000">сбор заявок</div>
<svg class="a" style="left:82px;top:830px" width="14" height="12" shape-rendering="crispEdges"><path d="M2.5 .5H11.5L13.5 2.5V9.5L11.5 11.5H2.5L.5 9.5V2.5Z" fill="#00ffff" stroke="#000"/><path d="M1 5L5 1" stroke="#000" shape-rendering="auto"/><path d="M8 3h2l1 1M3 6h2l1-1 1 1h1M9 5v2h2M3 8v1h2v-1M7 9h1l1-1 1 1h1" fill="none" stroke="#a86868"/></svg>
<div class="t" style="left:106px;top:829px;font-size:14px;letter-spacing:0.255px;color:#000">учет времени</div>
<svg class="a" style="left:82px;top:846px" width="14" height="12" shape-rendering="crispEdges"><path d="M2.5 .5H11.5L13.5 2.5V9.5L11.5 11.5H2.5L.5 9.5V2.5Z" fill="#00ffff" stroke="#000"/><path d="M1 5L5 1" stroke="#000" shape-rendering="auto"/><path d="M8 3h2l1 1M3 6h2l1-1 1 1h1M9 5v2h2M3 8v1h2v-1M7 9h1l1-1 1 1h1" fill="none" stroke="#a86868"/></svg>
<div class="t" style="left:106px;top:845px;font-size:14px;letter-spacing:0.173px;color:#000">контролирование расходов</div>
<div class="a" style="left:113px;top:965px;width:95px;height:21px;background:#f0f0f0;border-left:1px solid #fff;border-right:1px solid #000;border-bottom:1px solid #000;border-radius:0 0 3px 3px;box-shadow:inset -1px -1px #a0a0a0"></div>
<div class="a" style="left:208px;top:965px;width:85px;height:21px;background:#f0f0f0;border-left:1px solid #fff;border-right:1px solid #000;border-bottom:1px solid #000;border-radius:0 0 3px 3px;box-shadow:inset -1px -1px #a0a0a0"></div>
<div class="a" style="left:14px;top:961px;width:100px;height:28px;background:#f0f0f0;border-left:1px solid #fff;border-right:1px solid #000;border-bottom:1px solid #000;border-radius:0 0 3px 3px;box-shadow:inset -1px -1px #a0a0a0"></div>
<div class="t" style="left:38px;top:968px;font-size:14px;font-weight:bold">Activities</div>
<div class="t" style="left:135px;top:967px;font-size:14px">Diagrams</div>
<div class="t" style="left:233px;top:967px;font-size:13.6px">Objects</div>
<svg class="a" style="left:19px;top:967px" width="17" height="16"><rect width="17" height="16" fill="#c8c8c8"/><path d="M5 2L2 6M5 2l6 4M11 6l-7 7M11 6l5 7" stroke="#000" stroke-width=".8"/><rect x="3.5" y=".5" width="4" height="2.5" fill="#f00" stroke="#000" stroke-width=".8"/><rect x=".5" y="5.5" width="4" height="2.5" fill="#0f0" stroke="#000" stroke-width=".8"/><rect x="7.5" y="5.5" width="4" height="2.5" fill="#ff0" stroke="#000" stroke-width=".8"/><rect x="2.5" y="12.5" width="4" height="2.5" fill="#f0f" stroke="#000" stroke-width=".8"/><rect x="11.5" y="12.5" width="4" height="2.5" fill="#0ff" stroke="#000" stroke-width=".8"/></svg>
<svg class="a" style="left:116px;top:966px" width="16" height="16"><rect width="16" height="16" fill="#c8c8c8"/><rect x="3.5" y="5.5" width="12" height="10" fill="#fff" stroke="#000"/><rect x="1.5" y="3.5" width="12" height="9" fill="#fff" stroke="#000"/><rect x=".5" y=".5" width="12" height="9" fill="#fff" stroke="#000"/><path d="M1 3.5h11M3 6.5h3M8 6.5h3" stroke="#000"/></svg>
<svg class="a" style="left:214px;top:966px" width="16" height="16"><rect width="16" height="16" fill="#c8c8c8"/><rect x=".5" y="1.5" width="4" height="3" fill="#f00" stroke="#000" stroke-width=".8"/><rect x="2.5" y="4.5" width="4" height="3" fill="#f00" stroke="#000" stroke-width=".8"/><rect x="9.5" y="1.5" width="4" height="3" fill="#ff0" stroke="#000" stroke-width=".8"/><rect x="11.5" y="4.5" width="4" height="3" fill="#ff0" stroke="#000" stroke-width=".8"/><rect x=".5" y="9.5" width="4" height="3" fill="#0f0" stroke="#000" stroke-width=".8"/><rect x="2.5" y="12.5" width="4" height="3" fill="#0f0" stroke="#000" stroke-width=".8"/><rect x="9.5" y="9.5" width="4" height="3" fill="#f0f" stroke="#000" stroke-width=".8"/><rect x="11.5" y="12.5" width="4" height="3" fill="#f0f" stroke="#000" stroke-width=".8"/></svg>
<div class="a" style="left:599px;top:150px;width:1081px;height:841px;background:#f0f0f0"></div>
<div class="a" style="left:599px;top:150px;width:1px;height:820px;background:#808080"></div>
<div class="a" style="left:599px;top:150px;width:1079px;height:1px;background:#808080"></div>
<div class="a" style="left:600px;top:151px;width:1058px;height:818px;background:#fffbf0"></div>
<div class="a" style="left:1658px;top:151px;width:20px;height:818px;background:linear-gradient(90deg,#e3e3e3,#f0f0f0 25%,#f0f0f0 75%,#e8e8e8)"></div>
<svg class="a" style="left:1662px;top:158px" width="12" height="7"><path d="M.5 6.5h10l-5-5z" fill="#303030"/></svg>
<svg class="a" style="left:1662px;top:955px" width="12" height="7"><path d="M.5 .5h10l-5 5z" fill="#303030"/></svg>
<div class="a" style="left:1658px;top:173px;width:19px;height:19px;border:1px solid #9a9a9a;border-radius:2px;background:linear-gradient(90deg,#fafafa,#ececec 60%,#d8d8d8)"></div>
<svg class="a" style="left:1662px;top:177px" width="12" height="11"><path d="M1 1.5h9M1 5.5h9M1 9.5h9" stroke="#333" stroke-width="1"/></svg>
<div class="a" style="left:600px;top:969px;width:1058px;height:20px;background:linear-gradient(#e3e3e3,#f0f0f0 25%,#f0f0f0 75%,#e8e8e8)"></div>
<svg class="a" style="left:606px;top:974px" width="7" height="12"><path d="M6.5 .5v10l-5-5z" fill="#303030"/></svg>
<svg class="a" style="left:1643px;top:974px" width="7" height="12"><path d="M.5 .5v10l5-5z" fill="#303030"/></svg>
<div class="a" style="left:622px;top:970px;width:19px;height:18px;border:1px solid #9a9a9a;border-radius:2px;background:linear-gradient(#fafafa,#ececec 60%,#d8d8d8)"></div>
<svg class="a" style="left:626px;top:974px" width="11" height="10"><path d="M2.5 1v8M5.5 1v8M8.5 1v8" stroke="#333"/></svg>
<div class="a" style="left:1658px;top:969px;width:20px;height:21px;background:#f0f0f0"></div>
<svg class="a" style="left:0;top:0;white-space:pre" width="1680" height="1050" font-family="Liberation Sans">
<defs><pattern id="dith" width="4" height="4" patternUnits="userSpaceOnUse"><rect x="2" y="0" width="1" height="1" fill="#000"/><rect x="1" y="1" width="1" height="1" fill="#000"/><rect x="3" y="2" width="1" height="1" fill="#000"/><rect x="0" y="3" width="1" height="1" fill="#000"/></pattern></defs>
<path d="M618.5 162.5H1615.5V241.5H618.5Z" fill="none" stroke="#000" stroke-width="1"/>
<path d="M706.5 162.5V241.5M1117.5 162.5V241.5M1139.5 162.5V241.5M1306.5 162.5V241.5M1473.5 162.5V241.5" fill="none" stroke="#000" stroke-width="1"/>
<path d="M1117 182.5H1473M1117 201.5H1473M1117 221.5H1473" fill="none" stroke="#000" stroke-width="1"/>
<rect x="1118" y="163" width="21" height="19" fill="#000"/>
<text x="623" y="177" font-size="12" text-anchor="start" fill="#000" >USED AT:</text>
<text x="711" y="177" font-size="12" text-anchor="start" fill="#000" >AUTHOR:</text>
<text x="770" y="177" font-size="12" text-anchor="start" fill="#000" >Бескровный Олег, группа А-56</text>
<text x="711" y="195" font-size="12" text-anchor="start" fill="#000" >PROJECT:</text>
<text x="776" y="195" font-size="12" text-anchor="start" fill="#000" >Курсовая работа</text>
<text x="711" y="236" font-size="12" text-anchor="start" fill="#000" >NOTES:</text>
<text x="763" y="236" font-size="12" text-anchor="start" fill="#000" >1</text>
<text x="776" y="236" font-size="12" text-anchor="start" fill="#000" >2</text>
<text x="789" y="236" font-size="12" text-anchor="start" fill="#000" >3</text>
<text x="802" y="236" font-size="12" text-anchor="start" fill="#000" >4</text>
<text x="815" y="236" font-size="12" text-anchor="start" fill="#000" >5</text>
<text x="828" y="236" font-size="12" text-anchor="start" fill="#000" >6</text>
<text x="841" y="236" font-size="12" text-anchor="start" fill="#000" >7</text>
<text x="854" y="236" font-size="12" text-anchor="start" fill="#000" >8</text>
<text x="867" y="236" font-size="12" text-anchor="start" fill="#000" >9</text>
<text x="880" y="236" font-size="12" text-anchor="start" fill="#000" >10</text>
<text x="1014" y="177" font-size="12" text-anchor="start" fill="#000" >DATE:</text>
<text x="1054" y="177" font-size="12" text-anchor="start" fill="#000" >02.05.2009</text>
<text x="1014" y="195" font-size="12" text-anchor="start" fill="#000" >REV:</text>
<text x="1054" y="195" font-size="12" text-anchor="start" fill="#000" >20.05.2009</text>
<text x="1144" y="177" font-size="12" text-anchor="start" fill="#000" >WORKING</text>
<text x="1144" y="196" font-size="12" text-anchor="start" fill="#000" >DRAFT</text>
<text x="1144" y="216" font-size="12" text-anchor="start" fill="#000" >RECOMMENDED</text>
<text x="1144" y="236" font-size="12" text-anchor="start" fill="#000" >PUBLICATION</text>
<text x="1311" y="177" font-size="12" text-anchor="start" fill="#000" >READER</text>
<text x="1467" y="177" font-size="12" text-anchor="end" fill="#000" >DATE</text>
<text x="1477" y="177" font-size="12" text-anchor="start" fill="#000" >CONTEXT:</text>
<text x="1477" y="236" font-size="12" text-anchor="start" fill="#000" >A0</text>
<rect x="1481.5" y="189.5" width="17" height="7" fill="none" stroke="#000"/>
<rect x="1504.5" y="195.5" width="19" height="7" fill="none" stroke="#000"/>
<rect x="1528" y="207" width="21" height="8" fill="#000"/>
<rect x="1556.5" y="217.5" width="18" height="6" fill="none" stroke="#000"/>
<rect x="1582.5" y="216.5" width="18" height="7" fill="none" stroke="#000"/>
<rect x="1584.5" y="228.5" width="17" height="7" fill="none" stroke="#000"/>
<path d="M618.5 241.5V851.5H1615.5V241.5" fill="none" stroke="#000" stroke-width="1"/>
<path d="M618 794.5H1616M808.5 794.5V851.5M1353.5 794.5V851.5M1545.5 833.5H1615.5M1545.5 833.5V851.5" fill="none" stroke="#000" stroke-width="1"/>
<text x="623" y="807" font-size="12" text-anchor="start" fill="#000" >NODE:</text>
<text x="812" y="807" font-size="12" text-anchor="start" fill="#000" >TITLE:</text>
<text x="1358" y="807" font-size="12" text-anchor="start" fill="#000" >NUMBER:</text>
<text x="711" y="840" font-size="22.2" text-anchor="middle" fill="#000" >A3</text>
<text x="1103" y="815" font-size="21.9" text-anchor="middle" fill="#000" >высадка семян</text>
<rect x="771" y="400" width="180" height="9" fill="url(#dith)"/>
<rect x="942" y="300" width="9" height="100" fill="url(#dith)"/>
<rect x="762" y="291" width="179" height="108" fill="#fffbf0" stroke="#000" stroke-width="2"/>
<path d="M763 300.5L771.5 292" stroke="#000" stroke-width="2"/>
<text x="853.3" y="340" font-size="14" text-anchor="middle" fill="#000" >вспахивание земли</text>
<text x="767" y="394" font-size="12" text-anchor="start" fill="#000" >0р.</text>
<text x="937" y="394" font-size="12" text-anchor="end" fill="#000" >1</text>
<rect x="924" y="520" width="180" height="9" fill="url(#dith)"/>
<rect x="1095" y="435" width="9" height="85" fill="url(#dith)"/>
<rect x="915" y="426" width="179" height="93" fill="#fffbf0" stroke="#000" stroke-width="2"/>
<path d="M916 435.5L924.5 427" stroke="#000" stroke-width="2"/>
<text x="1005.7" y="459" font-size="16.7" text-anchor="middle" fill="#000" >создание лунок</text>
<text x="1008.3" y="479" font-size="16.7" text-anchor="middle" fill="#000" >для семян</text>
<text x="920" y="514" font-size="12" text-anchor="start" fill="#000" >0р.</text>
<text x="1090" y="514" font-size="12" text-anchor="end" fill="#000" >2</text>
<rect x="1037" y="673" width="189" height="9" fill="url(#dith)"/>
<rect x="1217" y="574" width="9" height="99" fill="url(#dith)"/>
<rect x="1028" y="565" width="188" height="107" fill="#fffbf0" stroke="#000" stroke-width="2"/>
<path d="M1029 574.5L1037.5 566" stroke="#000" stroke-width="2"/>
<text x="1120.5" y="605" font-size="16.5" text-anchor="middle" fill="#000" >распределение</text>
<text x="1125.5" y="625" font-size="16.5" text-anchor="middle" fill="#000" >по сортам</text>
<text x="1033" y="667" font-size="12" text-anchor="start" fill="#000" >0р.</text>
<text x="1212" y="667" font-size="12" text-anchor="end" fill="#000" >3</text>
<rect x="1302" y="772" width="167" height="9" fill="url(#dith)"/>
<rect x="1460" y="682" width="9" height="90" fill="url(#dith)"/>
<rect x="1293" y="673" width="166" height="98" fill="#fffbf0" stroke="#000" stroke-width="2"/>
<path d="M1294 682.5L1302.5 674" stroke="#000" stroke-width="2"/>
<text x="1374.7" y="719" font-size="16.5" text-anchor="middle" fill="#000" >посев семян</text>
<text x="1298" y="766" font-size="12" text-anchor="start" fill="#000" >0р.</text>
<text x="1455" y="766" font-size="12" text-anchor="end" fill="#000" >4</text>
<path d="M636 344.5H752" fill="none" stroke="#000" stroke-width="1"/>
<path d="M752 341L761 344V346L752 349Z" fill="#000"/>
<text x="633" y="322" font-size="14.4" text-anchor="start" fill="#000" >док-ты о</text>
<text x="633" y="340" font-size="14.4" text-anchor="start" fill="#000" >готовности к</text>
<text x="633" y="357" font-size="14.1" text-anchor="start" fill="#000" >выращиванию</text>
<path d="M942 326.5H1098.5Q1104.5 326.5 1104.5 332.5V406.5Q1104.5 412.5 1098.5 412.5H907.5Q901.5 412.5 901.5 418.5V469L906 475" fill="none" stroke="#000" stroke-width="1"/>
<path d="M905 471L914 474V476L905 479Z" fill="#000"/>
<text x="1112" y="353" font-size="14.2" text-anchor="start" fill="#000" >земля вспахана</text>
<path d="M1095 470.5H1219.5Q1225.5 470.5 1225.5 476.5V545.5Q1225.5 551.5 1219.5 551.5H1002.5Q996.5 551.5 996.5 557.5V572.5Q996.5 578.5 1002.5 578.5H1018" fill="none" stroke="#000" stroke-width="1"/>
<path d="M1018 575L1027 578V580L1018 583Z" fill="#000"/>
<text x="1117" y="541" font-size="14.2" text-anchor="start" fill="#000" >лунки созданы</text>
<path d="M636 632.5H1018" fill="none" stroke="#000" stroke-width="1"/>
<path d="M1018 629L1027 632V634L1018 637Z" fill="#000"/>
<text x="696" y="628" font-size="14.2" text-anchor="start" fill="#000" >док-ты на заключение контрактов</text>
<path d="M1217 619.5H1237.5Q1243.5 619.5 1243.5 625.5V703.5Q1243.5 709.5 1249.5 709.5H1283" fill="none" stroke="#000" stroke-width="1"/>
<path d="M1283 706L1292 709V711L1283 714Z" fill="#000"/>
<text x="1253" y="637" font-size="13.8" text-anchor="start" fill="#000" >высадка в</text>
<text x="1253" y="654" font-size="14.2" text-anchor="start" fill="#000" >почву</text>
<path d="M1460 713.5H1586" fill="none" stroke="#000" stroke-width="1"/>
<path d="M1586 710L1597 713V715L1586 718Z" fill="#000"/>
<text x="1473" y="705" font-size="14.2" text-anchor="start" fill="#000" >проросшие семяна</text>
</svg>
<div class="a" style="left:600px;top:990px;width:1080px;height:1px;background:#e0e0e0"></div>
<div class="a" style="left:0;top:991px;width:1680px;height:1px;background:#fff"></div>
<div class="t" style="left:2px;top:998px;font-size:14px">Ready</div>
<div class="a" style="left:1448px;top:994px;width:116px;height:20px;border:1px solid;border-color:#a0a0a0 #fff #fff #a0a0a0"></div>
<div class="a" style="left:1564px;top:994px;width:33px;height:20px;border:1px solid;border-color:#a0a0a0 #fff #fff #a0a0a0"></div>
<div class="a" style="left:1599px;top:994px;width:39px;height:20px;border:1px solid;border-color:#a0a0a0 #fff #fff #a0a0a0"></div>
<div class="a" style="left:1641px;top:994px;width:39px;height:20px;border:1px solid;border-color:#a0a0a0 #fff #fff #a0a0a0"></div>
<div class="a" style="left:0;top:1014px;width:1680px;height:36px;background:linear-gradient(#333 0,#333 1px,#a0a0a0 1px,#a0a0a0 2px,#787878 2px,#3a3a3a 15px,#000 15px,#000)"></div>
<div class="a" style="left:0;top:1013px;width:1680px;height:1px;background:#fff"></div>
<div class="a" style="left:11px;top:1007px;width:50px;height:50px;border-radius:50%;background:radial-gradient(circle at 50% 85%,#30c0f0 0,#1870b0 30%,#0a3a70 60%,#051a38 80%),#0a3a70;border:1px solid #102030;box-shadow:0 0 2px #000"></div>
<div class="a" style="left:15px;top:1009px;width:42px;height:24px;border-radius:21px 21px 12px 12px;background:linear-gradient(rgba(255,255,255,.55),rgba(255,255,255,.12))"></div>
<svg class="a" style="left:18px;top:1014px" width="37" height="33" viewBox="0 0 40 36">
<path d="M8 5q5-3 12 1l-3 12q-7-3-12 0z" fill="#f06a20"/><path d="M22 7q6 3 13-1l-3 13q-7 3-13 0z" fill="#7cc040"/>
<path d="M4 20q5-3 12 0l-3 12q-7-3-12 0z" fill="#2a9ae0"/><path d="M18 21q6 3 13 0l-3 13q-7 3-13 0z" fill="#f8c020"/>
</svg>
<svg class="a" style="left:80px;top:1021px" width="50" height="22"><ellipse cx="9" cy="11" rx="6" ry="9" fill="none" stroke="#c01010" stroke-width="4"/><rect x="28" y="2" width="19" height="19" rx="2" fill="#2040c0"/><rect x="31" y="12" width="13" height="8" fill="#fff"/><path d="M31 14h13M31 17h13" stroke="#e03030"/><rect x="33" y="2" width="9" height="6" fill="#c0c8e0"/></svg>
<div class="t" style="left:153px;top:1017px;font-size:13px;color:#fff;font-weight:bold">»</div>
<div class="a" style="left:174px;top:1016px;width:196px;height:33px;border:1px solid #2a2a2a;border-radius:3px;background:linear-gradient(#a8a8a8,#727272 25%,#3a3a3a 46%,#000 50%,#000);box-shadow:inset 0 0 0 1px rgba(255,255,255,.28)"></div><svg class="a" style="left:186px;top:1021px" width="14" height="22"><path d="M1 1h11l-3 9h-5z" fill="#3a90b0"/><path d="M4 8l2-5 3 2" stroke="#a0e0a0" fill="none"/><rect x="5.5" y="10" width="2" height="5" fill="#70c060"/><path d="M1 17q5-3 11 0v3q-5 3-11 0z" fill="#f08010"/></svg><div class="t" style="left:208px;top:1025px;font-size:15px;color:#fff">Игры</div>
<div class="a" style="left:374px;top:1016px;width:196px;height:33px;border:1px solid #2a2a2a;border-radius:3px;background:linear-gradient(#a8a8a8,#727272 25%,#3a3a3a 46%,#000 50%,#000);box-shadow:inset 0 0 0 1px rgba(255,255,255,.28)"></div><svg class="a" style="left:383px;top:1020px" width="20" height="24"><path d="M2 4l8 3v16l-8-3z" fill="#d8b040"/><path d="M10 7l7-2v15l-7 3z" fill="#f0d890"/><path d="M13 1l5 5h-3v5h-4v-5h-3z" fill="#30c030"/></svg><div class="t" style="left:408px;top:1025px;font-size:14.5px;color:#fff">курсач для передел...</div>
<div class="a" style="left:574px;top:1016px;width:196px;height:33px;border:1px solid #2a2a2a;border-radius:3px;background:linear-gradient(#a8a8a8,#727272 25%,#3a3a3a 46%,#000 50%,#000);box-shadow:inset 0 0 0 1px rgba(255,255,255,.28)"></div><svg class="a" style="left:584px;top:1022px" width="18" height="20"><path d="M3 3l9-2 4 14-9 3z" fill="#e0e0f0" stroke="#4040a0"/><circle cx="10" cy="8" r="3" fill="#d02040"/><path d="M2 17l14-14M4 6l12 8" stroke="#3030a0"/></svg><div class="t" style="left:608px;top:1025px;font-size:15px;color:#fff">Паук</div>
<div class="a" style="left:774px;top:1016px;width:196px;height:33px;border:1px solid #2a2a2a;border-radius:3px;background:linear-gradient(#a8a8a8,#727272 25%,#3a3a3a 46%,#000 50%,#000);box-shadow:inset 0 0 0 1px rgba(255,255,255,.28)"></div><svg class="a" style="left:784px;top:1022px" width="20" height="20"><rect x="4" y="2" width="14" height="17" fill="#e8eef8" stroke="#8090b0"/><rect x="1" y="4" width="9" height="7" fill="#4070c0"/><path d="M6 8h9M6 12h9M6 15h9" stroke="#6080b0"/></svg><div class="t" style="left:808px;top:1025px;font-size:15px;color:#fff">курсовая [Режим ог...</div>
<div class="a" style="left:974px;top:1016px;width:196px;height:33px;border:1px solid #2a2a2a;border-radius:3px;background:linear-gradient(#b0b0b0,#7a7a7a 25%,#444 46%,#151515 50%,#151515);box-shadow:inset 0 0 0 1px rgba(255,255,255,.28)"></div><div class="a" style="left:984px;top:1021px;width:22px;height:22px;background:#fff"></div><svg class="a" style="left:984px;top:1020px" width="22" height="24" viewBox="0 0 22 24"><rect x="5.7" y="7.5" width="10.6" height="7.8" rx="1" fill="#fff" stroke="#ff0000" stroke-width="1.1"/><path d="M11.5 2v5M11.5 16v6M1 11.5h4.5M16.5 11.5h4" stroke="#ff0000" stroke-width="1.2"/><path d="M9.5 4.5h4l-2 2.5zM9.5 18.5h4l-2-2.5zM3 9.5v4l2.5-2zM18 9.5v4l3-2z" fill="#ff0000"/></svg><div class="t" style="left:1008px;top:1025px;font-size:14.4px;color:#fff">Computer Associates...</div>
<div class="t" style="left:1426px;top:1024px;font-size:14px;color:#fff">RU</div>
<svg class="a" style="left:1466px;top:1025px" width="14" height="14"><path d="M10 2L4 7l6 5" fill="none" stroke="#fff" stroke-width="2.2"/></svg>
<svg class="a" style="left:1480px;top:1014px" width="140" height="34">
<path d="M11 6H17V12L22 6H28L19 16L14 23L11 25Z" fill="#f00" stroke="#fff" stroke-width="1.2"/><path d="M19 17L22 14L28 17V25H19Z" fill="#000" stroke="#fff" stroke-width="1.2"/>
<rect x="34" y="8" width="19" height="15" fill="#a8b0a8"/><path d="M34 8V6h3v2M41 8V6h3v2M49 8V6h3v2" fill="#b8c0b8" stroke="#a8b0a8"/><path d="M34 12.5h19M34 17.5h19M38 8v4M45 8v4M41 12v5M48 12v5M38 17v6M45 17v6" stroke="#d0d8c8" stroke-width=".8"/>
<circle cx="49" cy="20" r="5.5" fill="#e0a020"/><rect x="48" y="16" width="2.2" height="3.5" fill="#000"/><rect x="48" y="21" width="2.2" height="2" fill="#000"/>
<path d="M74 11h9v6l-2 3v8h-4v-8l-3-3z" fill="#f0f0f0" stroke="#fff"/><rect x="75" y="6" width="1.6" height="5" fill="#f0d020"/><rect x="79.5" y="6" width="1.6" height="5" fill="#f0d020"/>
<rect x="83" y="7.5" width="8.5" height="17" rx="1" fill="#b0f0c0" stroke="#fff" stroke-width="1.5"/>
<rect x="102" y="9.5" width="11" height="9" fill="#555" stroke="#fff" stroke-width="1.4"/><rect x="96.5" y="13.5" width="11" height="9" fill="#555" stroke="#fff" stroke-width="1.4"/><path d="M100 23v3h4" stroke="#fff" stroke-width="1.4" fill="none"/>
<path d="M106 17l9 9M115 17l-9 9" stroke="#f00" stroke-width="2.6"/>
<path d="M120 13h3l6-6v18l-6-5h-3z" fill="#d8dce8" stroke="#fff" stroke-width=".6"/><rect x="120" y="13" width="2" height="7" fill="#7080c0"/><path d="M132 11q3 5 0 10M135 9q4 7 0 14" fill="none" stroke="#50b060" stroke-width="1.2"/>
</svg>
<div class="t" style="left:1630px;top:1024px;font-size:14px;color:#fff">21:26</div>
</body></html>
